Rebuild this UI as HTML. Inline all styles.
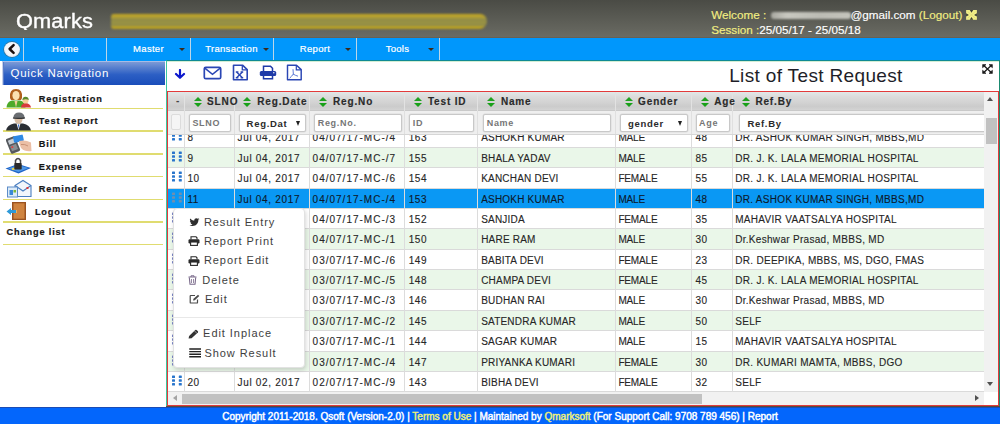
<!DOCTYPE html>
<html><head><meta charset="utf-8">
<style>
*{margin:0;padding:0;box-sizing:border-box}
html,body{width:1000px;height:424px;overflow:hidden;background:#fff;font-family:"Liberation Sans",sans-serif}
.abs{position:absolute}
#hdr{left:0;top:0;width:1000px;height:37.5px;background:linear-gradient(#4a4b45,#6b6c64)}
#logo{left:16.3px;top:8.9px;height:21.4px;overflow:hidden;color:#fff;font-size:20px;line-height:24px;letter-spacing:.1px;-webkit-text-stroke:.35px #fff;transform:scaleX(1.09);transform-origin:0 0}
#blur1{left:111px;top:13.5px;width:376px;height:15.5px;background:linear-gradient(#c8aa20 0,#b4a032 18%,#8e8b4a 40%,#9c9440 58%,#8c8a4e 74%,#c4a81c 90%,#b09a2a 100%);filter:blur(1px);border-radius:3px 7px 8px 3px}
#welcome{left:711.2px;top:7px;font-size:11.7px;line-height:15px;color:#f2ee82;white-space:nowrap;-webkit-text-stroke:.15px}
#blur2{left:771px;top:12px;width:80px;height:7px;background:linear-gradient(90deg,#a8a8a0,#c8c8c0 20%,#bcbcb4 60%,#c4c4bc);filter:blur(1.2px);border-radius:3px}
#nav{left:0;top:37.5px;width:1000px;height:23px;background:#0097fc;box-shadow:0 -1px 0 #6a6052}
.nv{position:absolute;top:0;height:23px;color:#fff;font-size:9.5px;line-height:22.6px;text-align:center;letter-spacing:.3px;-webkit-text-stroke:.2px #fff}
.dv{position:absolute;top:0;width:1px;height:23px;background:#bcd6e8}
.caret{position:absolute;top:10px;width:0;height:0;border-left:3px solid transparent;border-right:3px solid transparent;border-top:3px solid #3a2a1a}
#side{left:0;top:0;width:166px;height:407px}
#qn{left:1.5px;top:61px;width:163.5px;height:24px;background:linear-gradient(#7c9ad6,#2c5fc4 55%,#1a4dba);border-left:1px solid #c4d0ea;border-top:1px solid #a9bce4;box-shadow:inset 1px 0 0 #5a7cc8;color:#fff;font-size:11.5px;line-height:23.5px;padding-left:8px;letter-spacing:.73px}
.si{position:absolute;left:4px;width:159px;height:22.4px;border-bottom:1px solid #ddd86a}
.si span{position:absolute;left:35px;top:0;line-height:21px;font-size:10px;font-weight:bold;color:#1a1a1a;letter-spacing:.35px}
#panel{left:166px;top:60px;width:834px;height:347px;border-left:1px solid #3cc8a0;border-right:1px solid #1a8a70;border-top:1px solid #108a94}
#tline2{left:167px;top:61px;width:832px;height:1px;background:#d4eed4}
#title{left:729.2px;top:65px;font-size:19px;line-height:22px;color:#1e1e28;letter-spacing:.35px}
#grid{left:167px;top:91px;width:832px;height:315px;border:1px solid #e23b3b;overflow:hidden;background:#fff}
#foot{left:0;top:407px;width:1000px;height:17px;background:#0366fc;border-top:1px solid #1c4cb4;color:#fff;font-size:10px;line-height:17.4px;text-align:center;-webkit-text-stroke:.45px}
#tealb{left:166px;top:406px;width:834px;height:1px;background:#5a4a3a}

#ghead{left:0;top:0;width:816px;height:19.3px;background:linear-gradient(#e2e8e8,#dcdcdc 25%,#d2d2d2 60%,#cbcbcb 80%,#d3d3d3);border-bottom:1px solid #c9c9c9}
.hc{position:absolute;top:0;height:19.3px;border-right:1px solid #e2e2e2}
.hc b{position:absolute;top:0;line-height:20px;font-size:10px;color:#2a2a2a;letter-spacing:.85px;white-space:nowrap;-webkit-text-stroke:.15px}
.mn{position:absolute;left:8px;top:0;line-height:18px;font-size:10px;color:#444;font-weight:bold}
.sa{position:absolute;top:4.5px;width:9.5px;height:11px}
.sa:before{content:"";position:absolute;left:0;top:0;border-left:4.75px solid transparent;border-right:4.75px solid transparent;border-bottom:4.8px solid #20a020}
.sa:after{content:"";position:absolute;left:0;top:6px;border-left:4.75px solid transparent;border-right:4.75px solid transparent;border-top:4.8px solid #18a018}
#gfilt{left:0;top:19.3px;width:816px;height:23.7px;background:#efefef;border-bottom:1px solid #d6d6d6}
.fc{position:absolute;top:0;height:22.7px;border-right:1px solid #e0e0e0}
.inp{position:absolute;top:3px;height:17.5px;background:#fff;border:1px solid #c8c8c8;box-shadow:0 0 0 .5px #dcdcdc;border-radius:2px;font-size:9px;font-weight:bold;line-height:17px;padding-left:2.5px;letter-spacing:.7px;white-space:nowrap;overflow:hidden}
.ph{color:#767676}
.sel{color:#2a2a2a;padding-left:7px;font-size:9.5px}
.sel u{position:absolute;right:5.5px;top:6px;border-left:2.6px solid transparent;border-right:2.6px solid transparent;border-top:5px solid #222}
.fbox{position:absolute;top:3px;height:16px;background:#f5f5f5;border:1px solid #dcdcdc;border-radius:2px}
.row{position:absolute;left:0;width:816px;height:20.38px;border-bottom:1px solid #dadada;color:#262626}
.cell{position:absolute;top:0;height:20.38px;line-height:21.3px;font-size:10px;color:inherit;-webkit-text-stroke:.12px;border-right:1px solid #dcdcdc;white-space:nowrap;overflow:hidden}
.c0{}
.dh{position:absolute;left:3.8px;top:3px}
#vsb{left:816.2px;top:0;width:13.5px;height:299.7px;background:#f1f1f1}
#vsb .up{position:absolute;left:3.2px;top:5px;border-left:3.5px solid transparent;border-right:3.5px solid transparent;border-bottom:4px solid #505050}
#vsb .dn{position:absolute;left:3.2px;top:290px;border-left:3.5px solid transparent;border-right:3.5px solid transparent;border-top:4px solid #505050}
#vsb .thumb{position:absolute;left:1.8px;top:25.7px;width:10.6px;height:26.4px;background:#c1c1c1}
#hsb{left:0;top:299.7px;width:816.2px;height:13.3px;background:#f1f1f1}
#hsb .lt{position:absolute;left:5px;top:3px;border-top:3.5px solid transparent;border-bottom:3.5px solid transparent;border-right:4px solid #a3a3a3}
#hsb .rt{position:absolute;left:806.5px;top:3px;border-top:3.5px solid transparent;border-bottom:3.5px solid transparent;border-left:4px solid #505050}
#hsb .thumb{position:absolute;left:14.1px;top:2.4px;width:519.9px;height:10px;background:#c1c1c1}
#corner{left:816.2px;top:299.7px;width:13.5px;height:12.8px;background:#fff}

#back{left:4px;top:4.3px;width:16px;height:15px;border-radius:50%;background:radial-gradient(circle at 50% 45%,#f4f6fa 55%,#dfe3ea 75%,#a08a78 100%);box-shadow:0 0 0 .7px rgba(110,80,50,.55)}
#back svg{position:absolute;left:0;top:-.5px}

.sline{position:absolute;left:3.3px;width:159.7px;height:1.5px;background:#e0dc70}
.stx{position:absolute;line-height:22px;font-size:9.2px;font-weight:bold;color:#161616;letter-spacing:.85px;white-space:nowrap;-webkit-text-stroke:.2px #161616}
.ic{position:absolute}

#cmenu{left:173px;top:208px;width:132px;height:159.5px;background:#fff;border:1px solid #e2e2e2;border-radius:4px;box-shadow:1px 2px 4px rgba(0,0,0,.16)}
.mi{position:absolute;font-size:11px;line-height:14px;color:#3e3e3e;letter-spacing:.95px;white-space:nowrap}
</style></head>
<body>
<div id="hdr" class="abs"></div>
<div id="logo" class="abs">Qmarks</div>
<div id="blur1" class="abs"></div>
<div id="welcome" class="abs">Welcome : <span style="display:inline-block;width:81px"></span><span style="color:#fff">@gmail.com</span> (Logout)<br>Session :<span style="color:#fff">25/05/17 - 25/05/18</span></div>
<div id="blur2" class="abs"></div>
<svg class="abs" style="left:965.5px;top:10.2px" width="11" height="9.8" viewBox="0 0 11 10"><rect x="0" y="0" width="11" height="10" fill="#f2ee88"/><path d="M3.7 0 L5.5 2.9 L7.3 0Z M3.7 10 L5.5 7.1 L7.3 10Z M0 3.4 L2.9 5 L0 6.6Z M11 3.4 L8.1 5 L11 6.6Z" fill="#3a3c34"/><path d="M1.5 1.5 L9.5 8.5 M9.5 1.5 L1.5 8.5" stroke="#d8d470" stroke-width=".6"/></svg>

<div id="nav" class="abs">
 <div id="back" class="abs"><svg width="16" height="16" viewBox="0 0 16 16"><path d="M9.6 4.2 L5.6 8 L9.6 11.8" fill="none" stroke="#1a1010" stroke-width="2.5" stroke-linecap="round" stroke-linejoin="round"/></svg></div>
 <div class="dv" style="left:23px"></div>
 <div class="nv" style="left:24px;width:82.5px">Home</div>
 <div class="dv" style="left:106.4px"></div>
 <div class="nv" style="left:107px;width:83px">Master</div><i class="caret" style="left:179.2px"></i>
 <div class="dv" style="left:189.6px"></div>
 <div class="nv" style="left:190px;width:83px">Transaction</div><i class="caret" style="left:262.5px"></i>
 <div class="dv" style="left:272.9px"></div>
 <div class="nv" style="left:273.5px;width:83px">Report</div><i class="caret" style="left:345px"></i>
 <div class="dv" style="left:356.1px"></div>
 <div class="nv" style="left:356.5px;width:82px">Tools</div><i class="caret" style="left:428.3px"></i>
 <div class="dv" style="left:438.5px"></div>
</div>

<div id="side" class="abs"><div class="sline" style="top:107.75px"></div>
<svg class="ic" style="left:5px;top:88px" width="27" height="20" viewBox="0 0 27 20"><path d="M1.5 19.5 Q2 13.5 7 12.5 L15 12.5 Q20 13.5 20.5 19.5Z" fill="#4caa2a"/><path d="M9.5 13 L11 19.5 L12.5 13Z" fill="#f3d09a"/><path d="M5 10 Q4 1 11 1 Q18 1 17 10 L16 12 L6 12Z" fill="#b0601c"/><ellipse cx="11" cy="7.6" rx="3.6" ry="4.6" fill="#fbe0b0"/><path d="M16 19.5 Q16 15.5 20.5 15 Q25.5 15.5 26 19.5Z" fill="#d83a3a"/><circle cx="20.5" cy="12.5" r="3" fill="#f5cf98"/><path d="M17.3 12 Q18 8.6 20.5 8.8 Q23.5 8.8 23.8 12 Q21 10.5 17.3 12Z" fill="#5a8a2a"/></svg>
<span class="stx" style="left:38.8px;top:87.85px">Registration</span>
<div class="sline" style="top:130.45px"></div>
<svg class="ic" style="left:5px;top:111px" width="27" height="20" viewBox="0 0 27 20"><path d="M1 19.5 Q2 14 9 12.5 L18 12.5 Q25 14 26 19.5Z" fill="#2a2e33"/><path d="M11.5 12.5 L13.5 19 L15.5 12.5Z" fill="#f4f4f4"/><path d="M13 13.5 L13.5 18 L14.2 13.5Z" fill="#1a5ac8"/><ellipse cx="13.5" cy="8.3" rx="4" ry="4.5" fill="#d9bea5"/><path d="M8.3 6.5 Q9 1.5 14 1.5 Q19 1.5 19.5 6 L19 7.8 L8.5 7.5Z" fill="#6a6e72"/><path d="M8 7 Q13 8 20 6.8" stroke="#333" stroke-width="1.2" fill="none"/></svg>
<span class="stx" style="left:38.8px;top:110.25px">Test Report</span>
<div class="sline" style="top:153.15px"></div>
<svg class="ic" style="left:6px;top:134px" width="26" height="20" viewBox="0 0 26 20"><g transform="rotate(-22 7 11)"><rect x="2" y="3" width="10" height="16" rx="1.8" fill="#55595e"/><rect x="3.8" y="5" width="6.4" height="4.5" fill="#c5ccd3"/><rect x="3.8" y="11" width="6.4" height="5.5" fill="#8a8e92"/><rect x="4.5" y="12" width="2" height="1.5" fill="#e04040"/></g><rect x="7.5" y="1.5" width="10" height="6.5" rx="1" fill="#2f8ae5" transform="rotate(-12 12 5)"/><path d="M13 7 Q19 5.5 25 8.5 L25.5 17 Q19 18 15 14 L13.5 10Z" fill="#ebbfa6"/><path d="M15 10.5 Q19 10 22 12" stroke="#c48c72" stroke-width=".9" fill="none"/></svg>
<span class="stx" style="left:38.8px;top:132.95px">Bill</span>
<div class="sline" style="top:175.85px"></div>
<svg class="ic" style="left:5px;top:156px" width="27" height="19" viewBox="0 0 27 19"><path d="M0.5 12.5 L13 8 L26 12 L13.5 17.5Z" fill="#1f64c8"/><path d="M3 12.5 L13 9 L23.5 12 L13.5 16Z" fill="#4f98e6"/><rect x="7" y="12" width="3" height="2" fill="#e8d050" transform="rotate(-15 8 13)"/><path d="M10.5 7.5 L10.5 4.5 Q13 0.3 15.5 4.5 L15.5 7.5" fill="none" stroke="#4a4a4a" stroke-width="1.5"/><rect x="9.3" y="7" width="7.4" height="6.5" rx=".8" fill="#2a2a2a"/></svg>
<span class="stx" style="left:38.8px;top:155.65px">Expense</span>
<div class="sline" style="top:198.55px"></div>
<svg class="ic" style="left:6px;top:179px" width="26" height="19" viewBox="0 0 26 19"><path d="M9 6.5 L17 1.5 L25 6.5 L25 17.5 L9 17.5Z" fill="#f2f6fb" stroke="#4a7ec0" stroke-width="1.1"/><path d="M9 6.5 L17 12 L25 6.5" fill="none" stroke="#4a7ec0" stroke-width="1.1"/><rect x="20.5" y="8" width="2" height="2" fill="#e03838"/><rect x="1.5" y="8" width="10" height="10" fill="#dcebf8" stroke="#5c8cc8" stroke-width="1"/><rect x="3.5" y="11" width="3.5" height="5" fill="#3a88d8"/><rect x="7.5" y="11" width="2.5" height="2.5" fill="#7ab83a"/></svg>
<span class="stx" style="left:38.8px;top:178.35px">Reminder</span>
<div class="sline" style="top:221.25px"></div>
<svg class="ic" style="left:6px;top:201px" width="21" height="20" viewBox="0 0 21 20"><path d="M6 1 L20 1 L20 19 L6 19Z" fill="#9a5220"/><path d="M7.5 2.3 L18.5 2.3 L18.5 17.7 L7.5 17.7Z" fill="#cf8440"/><rect x="9" y="9" width="1.6" height="3" fill="#f5d878"/><path d="M0.5 10.5 L5 7 L5 9 L10 9 L10 12 L5 12 L5 14Z" fill="#2f9ad8"/></svg>
<span class="stx" style="left:34.9px;top:201.05px">Logout</span>
<div class="sline" style="top:243.95px"></div>

<span class="stx" style="left:6.6px;top:220.75px">Change list</span></div>
<div id="qn" class="abs">Quick Navigation</div>

<div id="panel" class="abs"></div>
<div id="tline2" class="abs"></div>
<div id="tbar" class="abs">
<svg class="abs" style="left:174px;top:69px" width="12" height="10" viewBox="0 0 12 10"><path d="M6 1 L6 8.5 M2 5 L6 8.8 L10 5" fill="none" stroke="#0c18cc" stroke-width="2.2" stroke-linecap="round" stroke-linejoin="round"/></svg>
<svg class="abs" style="left:203px;top:65.5px" width="19" height="14" viewBox="0 0 19 14"><rect x="1.3" y="1.3" width="16.4" height="11.4" rx="1.5" fill="none" stroke="#2a46b4" stroke-width="1.7"/><path d="M1.8 2.2 L9.5 8.3 L17.2 2.2" fill="none" stroke="#2a46b4" stroke-width="1.5"/></svg>
<svg class="abs" style="left:232px;top:63.5px" width="17" height="17" viewBox="0 0 17 17"><path d="M1.5 1.2 L10.5 1.2 L15.2 5.6 L15.2 15.8 L1.5 15.8 Z" fill="none" stroke="#2a46b4" stroke-width="1.6" stroke-linejoin="round"/><path d="M10.3 1.5 L10.3 5.8 L15 5.8" fill="none" stroke="#2a46b4" stroke-width="1.3"/><path d="M4.6 8 L10.4 13.7 M10.4 8 L4.6 13.7 M3.8 8 L6.4 8 M8.6 8 L11.2 8 M3.8 13.7 L6.4 13.7 M8.6 13.7 L11.2 13.7" fill="none" stroke="#2a46b4" stroke-width="1.4"/></svg>
<svg class="abs" style="left:258.5px;top:64.5px" width="18" height="15" viewBox="0 0 18 15"><path d="M4.5 6 L4.5 1.3 L11.5 1.3 L13.5 3.3 L13.5 6" fill="none" stroke="#1e3aa8" stroke-width="1.5"/><rect x="0.8" y="6" width="16.4" height="5" rx="1.5" fill="#1e3aa8"/><path d="M4.5 10 L4.5 13.7 L13.5 13.7 L13.5 10" fill="none" stroke="#1e3aa8" stroke-width="1.5"/><circle cx="14.8" cy="7.7" r=".7" fill="#fff"/></svg>
<svg class="abs" style="left:285.8px;top:63.5px" width="17" height="17" viewBox="0 0 17 17"><path d="M1.5 1.2 L10.5 1.2 L15.2 5.6 L15.2 15.8 L1.5 15.8 Z" fill="none" stroke="#2a46b4" stroke-width="1.45" stroke-linejoin="round"/><path d="M10.3 1.5 L10.3 5.8 L15 5.8" fill="none" stroke="#2a46b4" stroke-width="1.2"/><path d="M7 5.2 Q7.2 8 7.4 10.5 M7.4 10 Q5.5 12.5 3.6 14.2 M7.4 10.2 Q9.5 11.5 12 12.2" fill="none" stroke="#4a6ad0" stroke-width=".9"/></svg>
<svg class="abs" style="left:981.8px;top:63.6px" width="11" height="10" viewBox="0 0 11 10" preserveAspectRatio="none"><path d="M1.8 1.6 L9.2 8.4 M9.2 1.6 L1.8 8.4" stroke="#1a1a1a" stroke-width="1.3"/><path d="M0.6 0.6 L4 0.6 L0.6 3.8Z M10.4 0.6 L7 0.6 L10.4 3.8Z M0.6 9.4 L4 9.4 L0.6 6.2Z M10.4 9.4 L7 9.4 L10.4 6.2Z" fill="#1a1a1a" stroke="#1a1a1a" stroke-width=".6"/></svg>
</div>
<div id="title" class="abs">List of Test Request</div>
<div id="grid" class="abs">
<div id="ghead" class="abs">
 <div class="hc" style="left:0;width:17.1px"><span class="mn">-</span></div>
 <div class="hc" style="left:17.1px;width:50.2px"><i class="sa" style="left:8.5px"></i><b style="left:22px">SLNO</b></div>
 <div class="hc" style="left:67.3px;width:75.2px"><i class="sa" style="left:8px"></i><b style="left:22px">Reg.Date</b></div>
 <div class="hc" style="left:142.5px;width:94.9px"><i class="sa" style="left:8.5px"></i><b style="left:22.5px">Reg.No</b></div>
 <div class="hc" style="left:237.4px;width:73.0px"><i class="sa" style="left:8.5px"></i><b style="left:22.5px">Test ID</b></div>
 <div class="hc" style="left:310.4px;width:137.7px"><i class="sa" style="left:8.5px"></i><b style="left:22.5px">Name</b></div>
 <div class="hc" style="left:448.1px;width:76.2px"><i class="sa" style="left:9px"></i><b style="left:22px">Gender</b></div>
 <div class="hc" style="left:524.3px;width:40.6px"><i class="sa" style="left:9px"></i><b style="left:22px">Age</b></div>
 <div class="hc" style="left:564.9px;width:260.0px;border-right:0"><i class="sa" style="left:9.5px"></i><b style="left:22.5px">Ref.By</b></div>
</div>
<div id="gfilt" class="abs">
 <div class="fc" style="left:0;width:17.1px"><span class="fbox" style="left:3.4px;width:9.6px"></span></div>
 <div class="fc" style="left:17.1px;width:50.2px"><span class="inp ph" style="left:3.8px;width:42px">SLNO</span></div>
 <div class="fc" style="left:67.3px;width:75.2px"><span class="inp sel" style="left:3.3px;width:67.6px">Reg.Dat<u></u></span></div>
 <div class="fc" style="left:142.5px;width:94.9px"><span class="inp ph" style="left:3.7px;width:87.4px">Reg.No.</span></div>
 <div class="fc" style="left:237.4px;width:73.0px"><span class="inp ph" style="left:3.8px;width:65px">ID</span></div>
 <div class="fc" style="left:310.4px;width:137.7px"><span class="inp ph" style="left:4.8px;width:127.9px">Name</span></div>
 <div class="fc" style="left:448.1px;width:76.2px"><span class="inp sel" style="left:4px;width:68.2px">gender<u></u></span></div>
 <div class="fc" style="left:524.3px;width:40.6px"><span class="inp ph" style="left:3.3px;width:34.8px">Age</span></div>
 <div class="fc" style="left:564.9px;width:260.0px;border-right:0"><span class="inp sel" style="left:6.5px;width:260px">Ref.By</span></div>
</div>
<!--GB-->
<div id="gbody" class="abs" style="left:0;top:43.00px;width:816px;height:257.00px;overflow:hidden">
<div class="row" style="top:-7.60px;background:#fff">
<div class="cell c0" style="left:0.00px;width:17.00px"><svg class="dh" width="10" height="11" viewBox="0 0 10 11"><g fill="#2a76cc"><rect x="0" y="0.5" width="3" height="2.6" rx=".6"/><rect x="0" y="4.2" width="3" height="2.6" rx=".6"/><rect x="0" y="7.9" width="3" height="2.6" rx=".6"/><rect x="6.8" y="0.5" width="3" height="2.6" rx=".6"/><rect x="6.8" y="4.2" width="3" height="2.6" rx=".6"/><rect x="6.8" y="7.9" width="3" height="2.6" rx=".6"/></g></svg></div>
<div class="cell" style="left:17.00px;width:50.20px;padding-left:2.4px;letter-spacing:0.50px">8</div>
<div class="cell" style="left:67.20px;width:75.20px;padding-left:2.3px;letter-spacing:0.70px">Jul 04, 2017</div>
<div class="cell" style="left:142.40px;width:94.90px;padding-left:2.2px;letter-spacing:1.00px">04/07/17-MC-/4</div>
<div class="cell" style="left:237.30px;width:73.20px;padding-left:3.5px;letter-spacing:0.50px">163</div>
<div class="cell" style="left:310.50px;width:137.50px;padding-left:2.7px;letter-spacing:0.20px">ASHOKH KUMAR</div>
<div class="cell" style="left:448.00px;width:76.20px;padding-left:2.4px;letter-spacing:-0.15px">MALE</div>
<div class="cell" style="left:524.20px;width:40.60px;padding-left:3.3px;letter-spacing:0.50px">48</div>
<div class="cell" style="left:564.80px;width:267.20px;padding-left:2.4px;letter-spacing:0.30px">DR. ASHOK KUMAR SINGH, MBBS,MD</div>
</div>
<div class="row" style="top:12.78px;background:#eaf7e9">
<div class="cell c0" style="left:0.00px;width:17.00px"><svg class="dh" width="10" height="11" viewBox="0 0 10 11"><g fill="#2a76cc"><rect x="0" y="0.5" width="3" height="2.6" rx=".6"/><rect x="0" y="4.2" width="3" height="2.6" rx=".6"/><rect x="0" y="7.9" width="3" height="2.6" rx=".6"/><rect x="6.8" y="0.5" width="3" height="2.6" rx=".6"/><rect x="6.8" y="4.2" width="3" height="2.6" rx=".6"/><rect x="6.8" y="7.9" width="3" height="2.6" rx=".6"/></g></svg></div>
<div class="cell" style="left:17.00px;width:50.20px;padding-left:2.4px;letter-spacing:0.50px">9</div>
<div class="cell" style="left:67.20px;width:75.20px;padding-left:2.3px;letter-spacing:0.70px">Jul 04, 2017</div>
<div class="cell" style="left:142.40px;width:94.90px;padding-left:2.2px;letter-spacing:1.00px">04/07/17-MC-/7</div>
<div class="cell" style="left:237.30px;width:73.20px;padding-left:3.5px;letter-spacing:0.50px">155</div>
<div class="cell" style="left:310.50px;width:137.50px;padding-left:2.7px;letter-spacing:0.20px">BHALA YADAV</div>
<div class="cell" style="left:448.00px;width:76.20px;padding-left:2.4px;letter-spacing:-0.15px">MALE</div>
<div class="cell" style="left:524.20px;width:40.60px;padding-left:3.3px;letter-spacing:0.50px">85</div>
<div class="cell" style="left:564.80px;width:267.20px;padding-left:2.4px;letter-spacing:0.30px">DR. J. K. LALA MEMORIAL HOSPITAL</div>
</div>
<div class="row" style="top:33.16px;background:#fff">
<div class="cell c0" style="left:0.00px;width:17.00px"><svg class="dh" width="10" height="11" viewBox="0 0 10 11"><g fill="#2a76cc"><rect x="0" y="0.5" width="3" height="2.6" rx=".6"/><rect x="0" y="4.2" width="3" height="2.6" rx=".6"/><rect x="0" y="7.9" width="3" height="2.6" rx=".6"/><rect x="6.8" y="0.5" width="3" height="2.6" rx=".6"/><rect x="6.8" y="4.2" width="3" height="2.6" rx=".6"/><rect x="6.8" y="7.9" width="3" height="2.6" rx=".6"/></g></svg></div>
<div class="cell" style="left:17.00px;width:50.20px;padding-left:2.4px;letter-spacing:0.50px">10</div>
<div class="cell" style="left:67.20px;width:75.20px;padding-left:2.3px;letter-spacing:0.70px">Jul 04, 2017</div>
<div class="cell" style="left:142.40px;width:94.90px;padding-left:2.2px;letter-spacing:1.00px">04/07/17-MC-/6</div>
<div class="cell" style="left:237.30px;width:73.20px;padding-left:3.5px;letter-spacing:0.50px">154</div>
<div class="cell" style="left:310.50px;width:137.50px;padding-left:2.7px;letter-spacing:0.20px">KANCHAN DEVI</div>
<div class="cell" style="left:448.00px;width:76.20px;padding-left:2.4px;letter-spacing:-0.15px">FEMALE</div>
<div class="cell" style="left:524.20px;width:40.60px;padding-left:3.3px;letter-spacing:0.50px">55</div>
<div class="cell" style="left:564.80px;width:267.20px;padding-left:2.4px;letter-spacing:0.30px">DR. J. K. LALA MEMORIAL HOSPITAL</div>
</div>
<div class="row" style="top:53.54px;background:#0a98f4;color:#0c1a2c">
<div class="cell c0" style="left:0.00px;width:17.00px"><svg class="dh" width="10" height="11" viewBox="0 0 10 11"><g fill="#6f8fb0"><rect x="0" y="0.5" width="3" height="2.6" rx=".6"/><rect x="0" y="4.2" width="3" height="2.6" rx=".6"/><rect x="0" y="7.9" width="3" height="2.6" rx=".6"/><rect x="6.8" y="0.5" width="3" height="2.6" rx=".6"/><rect x="6.8" y="4.2" width="3" height="2.6" rx=".6"/><rect x="6.8" y="7.9" width="3" height="2.6" rx=".6"/></g></svg></div>
<div class="cell" style="left:17.00px;width:50.20px;padding-left:2.4px;letter-spacing:0.50px">11</div>
<div class="cell" style="left:67.20px;width:75.20px;padding-left:2.3px;letter-spacing:0.70px">Jul 04, 2017</div>
<div class="cell" style="left:142.40px;width:94.90px;padding-left:2.2px;letter-spacing:1.00px">04/07/17-MC-/4</div>
<div class="cell" style="left:237.30px;width:73.20px;padding-left:3.5px;letter-spacing:0.50px">153</div>
<div class="cell" style="left:310.50px;width:137.50px;padding-left:2.7px;letter-spacing:0.20px">ASHOKH KUMAR</div>
<div class="cell" style="left:448.00px;width:76.20px;padding-left:2.4px;letter-spacing:-0.15px">MALE</div>
<div class="cell" style="left:524.20px;width:40.60px;padding-left:3.3px;letter-spacing:0.50px">48</div>
<div class="cell" style="left:564.80px;width:267.20px;padding-left:2.4px;letter-spacing:0.30px">DR. ASHOK KUMAR SINGH, MBBS,MD</div>
</div>
<div class="row" style="top:73.92px;background:#fff">
<div class="cell c0" style="left:0.00px;width:17.00px"><svg class="dh" width="10" height="11" viewBox="0 0 10 11"><g fill="#7a84c4"><rect x="0" y="0.5" width="3" height="2.6" rx=".6"/><rect x="0" y="4.2" width="3" height="2.6" rx=".6"/><rect x="0" y="7.9" width="3" height="2.6" rx=".6"/><rect x="6.8" y="0.5" width="3" height="2.6" rx=".6"/><rect x="6.8" y="4.2" width="3" height="2.6" rx=".6"/><rect x="6.8" y="7.9" width="3" height="2.6" rx=".6"/></g></svg></div>
<div class="cell" style="left:17.00px;width:50.20px;padding-left:2.4px;letter-spacing:0.50px">12</div>
<div class="cell" style="left:67.20px;width:75.20px;padding-left:2.3px;letter-spacing:0.70px">Jul 04, 2017</div>
<div class="cell" style="left:142.40px;width:94.90px;padding-left:2.2px;letter-spacing:1.00px">04/07/17-MC-/3</div>
<div class="cell" style="left:237.30px;width:73.20px;padding-left:3.5px;letter-spacing:0.50px">152</div>
<div class="cell" style="left:310.50px;width:137.50px;padding-left:2.7px;letter-spacing:0.20px">SANJIDA</div>
<div class="cell" style="left:448.00px;width:76.20px;padding-left:2.4px;letter-spacing:-0.15px">FEMALE</div>
<div class="cell" style="left:524.20px;width:40.60px;padding-left:3.3px;letter-spacing:0.50px">35</div>
<div class="cell" style="left:564.80px;width:267.20px;padding-left:2.4px;letter-spacing:0.30px">MAHAVIR VAATSALYA HOSPITAL</div>
</div>
<div class="row" style="top:94.30px;background:#eaf7e9">
<div class="cell c0" style="left:0.00px;width:17.00px"><svg class="dh" width="10" height="11" viewBox="0 0 10 11"><g fill="#7a84c4"><rect x="0" y="0.5" width="3" height="2.6" rx=".6"/><rect x="0" y="4.2" width="3" height="2.6" rx=".6"/><rect x="0" y="7.9" width="3" height="2.6" rx=".6"/><rect x="6.8" y="0.5" width="3" height="2.6" rx=".6"/><rect x="6.8" y="4.2" width="3" height="2.6" rx=".6"/><rect x="6.8" y="7.9" width="3" height="2.6" rx=".6"/></g></svg></div>
<div class="cell" style="left:17.00px;width:50.20px;padding-left:2.4px;letter-spacing:0.50px">13</div>
<div class="cell" style="left:67.20px;width:75.20px;padding-left:2.3px;letter-spacing:0.70px">Jul 04, 2017</div>
<div class="cell" style="left:142.40px;width:94.90px;padding-left:2.2px;letter-spacing:1.00px">04/07/17-MC-/1</div>
<div class="cell" style="left:237.30px;width:73.20px;padding-left:3.5px;letter-spacing:0.50px">150</div>
<div class="cell" style="left:310.50px;width:137.50px;padding-left:2.7px;letter-spacing:0.20px">HARE RAM</div>
<div class="cell" style="left:448.00px;width:76.20px;padding-left:2.4px;letter-spacing:-0.15px">MALE</div>
<div class="cell" style="left:524.20px;width:40.60px;padding-left:3.3px;letter-spacing:0.50px">30</div>
<div class="cell" style="left:564.80px;width:267.20px;padding-left:2.4px;letter-spacing:0.30px">Dr.Keshwar Prasad, MBBS, MD</div>
</div>
<div class="row" style="top:114.68px;background:#fff">
<div class="cell c0" style="left:0.00px;width:17.00px"><svg class="dh" width="10" height="11" viewBox="0 0 10 11"><g fill="#7a84c4"><rect x="0" y="0.5" width="3" height="2.6" rx=".6"/><rect x="0" y="4.2" width="3" height="2.6" rx=".6"/><rect x="0" y="7.9" width="3" height="2.6" rx=".6"/><rect x="6.8" y="0.5" width="3" height="2.6" rx=".6"/><rect x="6.8" y="4.2" width="3" height="2.6" rx=".6"/><rect x="6.8" y="7.9" width="3" height="2.6" rx=".6"/></g></svg></div>
<div class="cell" style="left:17.00px;width:50.20px;padding-left:2.4px;letter-spacing:0.50px">14</div>
<div class="cell" style="left:67.20px;width:75.20px;padding-left:2.3px;letter-spacing:0.70px">Jul 03, 2017</div>
<div class="cell" style="left:142.40px;width:94.90px;padding-left:2.2px;letter-spacing:1.00px">03/07/17-MC-/6</div>
<div class="cell" style="left:237.30px;width:73.20px;padding-left:3.5px;letter-spacing:0.50px">149</div>
<div class="cell" style="left:310.50px;width:137.50px;padding-left:2.7px;letter-spacing:0.20px">BABITA DEVI</div>
<div class="cell" style="left:448.00px;width:76.20px;padding-left:2.4px;letter-spacing:-0.15px">FEMALE</div>
<div class="cell" style="left:524.20px;width:40.60px;padding-left:3.3px;letter-spacing:0.50px">23</div>
<div class="cell" style="left:564.80px;width:267.20px;padding-left:2.4px;letter-spacing:0.30px">DR. DEEPIKA, MBBS, MS, DGO, FMAS</div>
</div>
<div class="row" style="top:135.06px;background:#eaf7e9">
<div class="cell c0" style="left:0.00px;width:17.00px"><svg class="dh" width="10" height="11" viewBox="0 0 10 11"><g fill="#7a84c4"><rect x="0" y="0.5" width="3" height="2.6" rx=".6"/><rect x="0" y="4.2" width="3" height="2.6" rx=".6"/><rect x="0" y="7.9" width="3" height="2.6" rx=".6"/><rect x="6.8" y="0.5" width="3" height="2.6" rx=".6"/><rect x="6.8" y="4.2" width="3" height="2.6" rx=".6"/><rect x="6.8" y="7.9" width="3" height="2.6" rx=".6"/></g></svg></div>
<div class="cell" style="left:17.00px;width:50.20px;padding-left:2.4px;letter-spacing:0.50px">15</div>
<div class="cell" style="left:67.20px;width:75.20px;padding-left:2.3px;letter-spacing:0.70px">Jul 03, 2017</div>
<div class="cell" style="left:142.40px;width:94.90px;padding-left:2.2px;letter-spacing:1.00px">03/07/17-MC-/5</div>
<div class="cell" style="left:237.30px;width:73.20px;padding-left:3.5px;letter-spacing:0.50px">148</div>
<div class="cell" style="left:310.50px;width:137.50px;padding-left:2.7px;letter-spacing:0.20px">CHAMPA DEVI</div>
<div class="cell" style="left:448.00px;width:76.20px;padding-left:2.4px;letter-spacing:-0.15px">FEMALE</div>
<div class="cell" style="left:524.20px;width:40.60px;padding-left:3.3px;letter-spacing:0.50px">45</div>
<div class="cell" style="left:564.80px;width:267.20px;padding-left:2.4px;letter-spacing:0.30px">DR. J. K. LALA MEMORIAL HOSPITAL</div>
</div>
<div class="row" style="top:155.44px;background:#fff">
<div class="cell c0" style="left:0.00px;width:17.00px"><svg class="dh" width="10" height="11" viewBox="0 0 10 11"><g fill="#7a84c4"><rect x="0" y="0.5" width="3" height="2.6" rx=".6"/><rect x="0" y="4.2" width="3" height="2.6" rx=".6"/><rect x="0" y="7.9" width="3" height="2.6" rx=".6"/><rect x="6.8" y="0.5" width="3" height="2.6" rx=".6"/><rect x="6.8" y="4.2" width="3" height="2.6" rx=".6"/><rect x="6.8" y="7.9" width="3" height="2.6" rx=".6"/></g></svg></div>
<div class="cell" style="left:17.00px;width:50.20px;padding-left:2.4px;letter-spacing:0.50px">16</div>
<div class="cell" style="left:67.20px;width:75.20px;padding-left:2.3px;letter-spacing:0.70px">Jul 03, 2017</div>
<div class="cell" style="left:142.40px;width:94.90px;padding-left:2.2px;letter-spacing:1.00px">03/07/17-MC-/3</div>
<div class="cell" style="left:237.30px;width:73.20px;padding-left:3.5px;letter-spacing:0.50px">146</div>
<div class="cell" style="left:310.50px;width:137.50px;padding-left:2.7px;letter-spacing:0.20px">BUDHAN RAI</div>
<div class="cell" style="left:448.00px;width:76.20px;padding-left:2.4px;letter-spacing:-0.15px">MALE</div>
<div class="cell" style="left:524.20px;width:40.60px;padding-left:3.3px;letter-spacing:0.50px">30</div>
<div class="cell" style="left:564.80px;width:267.20px;padding-left:2.4px;letter-spacing:0.30px">Dr.Keshwar Prasad, MBBS, MD</div>
</div>
<div class="row" style="top:175.82px;background:#eaf7e9">
<div class="cell c0" style="left:0.00px;width:17.00px"><svg class="dh" width="10" height="11" viewBox="0 0 10 11"><g fill="#7a84c4"><rect x="0" y="0.5" width="3" height="2.6" rx=".6"/><rect x="0" y="4.2" width="3" height="2.6" rx=".6"/><rect x="0" y="7.9" width="3" height="2.6" rx=".6"/><rect x="6.8" y="0.5" width="3" height="2.6" rx=".6"/><rect x="6.8" y="4.2" width="3" height="2.6" rx=".6"/><rect x="6.8" y="7.9" width="3" height="2.6" rx=".6"/></g></svg></div>
<div class="cell" style="left:17.00px;width:50.20px;padding-left:2.4px;letter-spacing:0.50px">17</div>
<div class="cell" style="left:67.20px;width:75.20px;padding-left:2.3px;letter-spacing:0.70px">Jul 03, 2017</div>
<div class="cell" style="left:142.40px;width:94.90px;padding-left:2.2px;letter-spacing:1.00px">03/07/17-MC-/2</div>
<div class="cell" style="left:237.30px;width:73.20px;padding-left:3.5px;letter-spacing:0.50px">145</div>
<div class="cell" style="left:310.50px;width:137.50px;padding-left:2.7px;letter-spacing:0.20px">SATENDRA KUMAR</div>
<div class="cell" style="left:448.00px;width:76.20px;padding-left:2.4px;letter-spacing:-0.15px">MALE</div>
<div class="cell" style="left:524.20px;width:40.60px;padding-left:3.3px;letter-spacing:0.50px">50</div>
<div class="cell" style="left:564.80px;width:267.20px;padding-left:2.4px;letter-spacing:0.30px">SELF</div>
</div>
<div class="row" style="top:196.20px;background:#fff">
<div class="cell c0" style="left:0.00px;width:17.00px"><svg class="dh" width="10" height="11" viewBox="0 0 10 11"><g fill="#7a84c4"><rect x="0" y="0.5" width="3" height="2.6" rx=".6"/><rect x="0" y="4.2" width="3" height="2.6" rx=".6"/><rect x="0" y="7.9" width="3" height="2.6" rx=".6"/><rect x="6.8" y="0.5" width="3" height="2.6" rx=".6"/><rect x="6.8" y="4.2" width="3" height="2.6" rx=".6"/><rect x="6.8" y="7.9" width="3" height="2.6" rx=".6"/></g></svg></div>
<div class="cell" style="left:17.00px;width:50.20px;padding-left:2.4px;letter-spacing:0.50px">18</div>
<div class="cell" style="left:67.20px;width:75.20px;padding-left:2.3px;letter-spacing:0.70px">Jul 03, 2017</div>
<div class="cell" style="left:142.40px;width:94.90px;padding-left:2.2px;letter-spacing:1.00px">03/07/17-MC-/1</div>
<div class="cell" style="left:237.30px;width:73.20px;padding-left:3.5px;letter-spacing:0.50px">144</div>
<div class="cell" style="left:310.50px;width:137.50px;padding-left:2.7px;letter-spacing:0.20px">SAGAR KUMAR</div>
<div class="cell" style="left:448.00px;width:76.20px;padding-left:2.4px;letter-spacing:-0.15px">MALE</div>
<div class="cell" style="left:524.20px;width:40.60px;padding-left:3.3px;letter-spacing:0.50px">15</div>
<div class="cell" style="left:564.80px;width:267.20px;padding-left:2.4px;letter-spacing:0.30px">MAHAVIR VAATSALYA HOSPITAL</div>
</div>
<div class="row" style="top:216.58px;background:#eaf7e9">
<div class="cell c0" style="left:0.00px;width:17.00px"><svg class="dh" width="10" height="11" viewBox="0 0 10 11"><g fill="#7a84c4"><rect x="0" y="0.5" width="3" height="2.6" rx=".6"/><rect x="0" y="4.2" width="3" height="2.6" rx=".6"/><rect x="0" y="7.9" width="3" height="2.6" rx=".6"/><rect x="6.8" y="0.5" width="3" height="2.6" rx=".6"/><rect x="6.8" y="4.2" width="3" height="2.6" rx=".6"/><rect x="6.8" y="7.9" width="3" height="2.6" rx=".6"/></g></svg></div>
<div class="cell" style="left:17.00px;width:50.20px;padding-left:2.4px;letter-spacing:0.50px">19</div>
<div class="cell" style="left:67.20px;width:75.20px;padding-left:2.3px;letter-spacing:0.70px">Jul 03, 2017</div>
<div class="cell" style="left:142.40px;width:94.90px;padding-left:2.2px;letter-spacing:1.00px">03/07/17-MC-/4</div>
<div class="cell" style="left:237.30px;width:73.20px;padding-left:3.5px;letter-spacing:0.50px">147</div>
<div class="cell" style="left:310.50px;width:137.50px;padding-left:2.7px;letter-spacing:0.20px">PRIYANKA KUMARI</div>
<div class="cell" style="left:448.00px;width:76.20px;padding-left:2.4px;letter-spacing:-0.15px">FEMALE</div>
<div class="cell" style="left:524.20px;width:40.60px;padding-left:3.3px;letter-spacing:0.50px">30</div>
<div class="cell" style="left:564.80px;width:267.20px;padding-left:2.4px;letter-spacing:0.30px">DR. KUMARI MAMTA, MBBS, DGO</div>
</div>
<div class="row" style="top:236.96px;background:#fff">
<div class="cell c0" style="left:0.00px;width:17.00px"><svg class="dh" width="10" height="11" viewBox="0 0 10 11"><g fill="#2a76cc"><rect x="0" y="0.5" width="3" height="2.6" rx=".6"/><rect x="0" y="4.2" width="3" height="2.6" rx=".6"/><rect x="0" y="7.9" width="3" height="2.6" rx=".6"/><rect x="6.8" y="0.5" width="3" height="2.6" rx=".6"/><rect x="6.8" y="4.2" width="3" height="2.6" rx=".6"/><rect x="6.8" y="7.9" width="3" height="2.6" rx=".6"/></g></svg></div>
<div class="cell" style="left:17.00px;width:50.20px;padding-left:2.4px;letter-spacing:0.50px">20</div>
<div class="cell" style="left:67.20px;width:75.20px;padding-left:2.3px;letter-spacing:0.70px">Jul 02, 2017</div>
<div class="cell" style="left:142.40px;width:94.90px;padding-left:2.2px;letter-spacing:1.00px">02/07/17-MC-/9</div>
<div class="cell" style="left:237.30px;width:73.20px;padding-left:3.5px;letter-spacing:0.50px">143</div>
<div class="cell" style="left:310.50px;width:137.50px;padding-left:2.7px;letter-spacing:0.20px">BIBHA DEVI</div>
<div class="cell" style="left:448.00px;width:76.20px;padding-left:2.4px;letter-spacing:-0.15px">FEMALE</div>
<div class="cell" style="left:524.20px;width:40.60px;padding-left:3.3px;letter-spacing:0.50px">32</div>
<div class="cell" style="left:564.80px;width:267.20px;padding-left:2.4px;letter-spacing:0.30px">SELF</div>
</div>
</div>
<!--/GB-->
<div id="vsb" class="abs"><i class="up"></i><i class="thumb"></i><i class="dn"></i></div>
<div id="hsb" class="abs"><i class="lt"></i><i class="thumb"></i><i class="rt"></i></div>
<div id="corner" class="abs"></div>
</div>
<div id="cmenu" class="abs">
<svg class="abs" style="left:14.8px;top:8.5px" width="11" height="9" viewBox="0 0 24 20"><path d="M23 2.5c-.8.4-1.7.6-2.6.7.9-.6 1.7-1.5 2-2.5-.9.5-1.9.9-2.9 1.1C18.6.9 17.4.3 16.1.3c-2.5 0-4.5 2-4.5 4.5 0 .4 0 .7.1 1C7.9 5.6 4.600 3.800 2.400 1.100 2 1.800 1.800 2.500 1.800 3.400c0 1.600.8 2.900 2 3.700-.7 0-1.400-.2-2-.6v.1c0 2.200 1.600 4 3.600 4.400-.4.1-.8.2-1.200.2-.3 0-.6 0-.8-.1.6 1.800 2.200 3.100 4.200 3.100-1.500 1.200-3.500 1.900-5.600 1.900-.4 0-.7 0-1.100-.1 2 1.300 4.400 2 6.900 2 8.300 0 12.800-6.900 12.800-12.800v-.6c.9-.6 1.700-1.400 2.300-2.300z" fill="#2e2e2e"/></svg>
<span class="mi" style="left:29.9px;top:5.7px">Result Entry</span>
<svg class="abs" style="left:14.3px;top:27.3px" width="12" height="10" viewBox="0 0 12 10"><path d="M3 3.5 L3 0.8 L8 0.8 L9 1.8 L9 3.5" fill="none" stroke="#2a2a2a" stroke-width="1.1"/><rect x="0.5" y="3.3" width="11" height="4.2" rx="1.2" fill="#2a2a2a"/><rect x="2.6" y="6" width="6.8" height="3.4" fill="#fff" stroke="#2a2a2a" stroke-width="1.1"/></svg>
<span class="mi" style="left:29.9px;top:24.9px">Report Print</span>
<svg class="abs" style="left:14.3px;top:46.8px" width="12" height="10" viewBox="0 0 12 10"><path d="M3 3.5 L3 0.8 L8 0.8 L9 1.8 L9 3.5" fill="none" stroke="#2a2a2a" stroke-width="1.1"/><rect x="0.5" y="3.3" width="11" height="4.2" rx="1.2" fill="#2a2a2a"/><rect x="2.6" y="6" width="6.8" height="3.4" fill="#fff" stroke="#2a2a2a" stroke-width="1.1"/></svg>
<span class="mi" style="left:29.9px;top:44.4px">Report Edit</span>
<svg class="abs" style="left:14.3px;top:66.2px" width="9" height="10" viewBox="0 0 9 10"><path d="M0.5 2 L8.5 2 M3 2 L3 0.8 L6 0.8 L6 2" fill="none" stroke="#7a6a8a" stroke-width="1"/><path d="M1.3 2.5 L2 9.3 L7 9.3 L7.7 2.5" fill="none" stroke="#7a6a8a" stroke-width="1.1"/><path d="M3.5 4 L3.5 8 M5.5 4 L5.5 8" stroke="#7a6a8a" stroke-width=".8"/></svg>
<span class="mi" style="left:28.3px;top:63.9px">Delete</span>
<svg class="abs" style="left:14.6px;top:84.6px" width="11" height="10" viewBox="0 0 11 10"><path d="M6 1.5 L1.8 1.5 Q1.2 1.5 1.2 2.1 L1.2 8.4 Q1.2 9 1.8 9 L7.9 9 Q8.5 9 8.5 8.4 L8.5 5.5" fill="none" stroke="#4a4a4a" stroke-width="1.2"/><path d="M4 6.5 L4.5 4.8 L9 0.7 L10.3 2 L5.8 6.2Z" fill="#4a4a4a"/></svg>
<span class="mi" style="left:30.9px;top:83.4px">Edit</span>
<div class="abs" style="left:0;top:108px;width:130px;height:1px;background:#e8e8e8"></div>
<svg class="abs" style="left:14.2px;top:120.3px" width="11" height="10" viewBox="0 0 11 10"><path d="M0.6 9.6 L1.1 6.9 L7.3 0.9 Q7.9 0.4 8.5 0.9 L9.9 2.3 Q10.4 2.9 9.9 3.5 L3.6 9.3Z" fill="#333"/><path d="M6.5 1.9 L8.9 4.3" stroke="#fff" stroke-width=".5"/></svg>
<span class="mi" style="left:29.1px;top:117.4px">Edit Inplace</span>
<svg class="abs" style="left:14.5px;top:138.6px" width="12.5" height="10" viewBox="0 0 12 10"><path d="M0 1 L12 1 M0 3.6 L12 3.6 M0 6.2 L12 6.2 M0 8.8 L12 8.8" stroke="#222" stroke-width="1.4"/></svg>
<span class="mi" style="left:30.4px;top:136.9px">Show Result</span>
</div>
<div id="tealb" class="abs"></div>
<div id="foot" class="abs">Copyright 2011-2018. Qsoft (Version-2.0) | <span style="color:#eef078">Terms of Use</span> | Maintained by <span style="color:#eef078">Qmarksoft</span> (For Support Call: 9708 789 456) | Report</div>
</body></html>
